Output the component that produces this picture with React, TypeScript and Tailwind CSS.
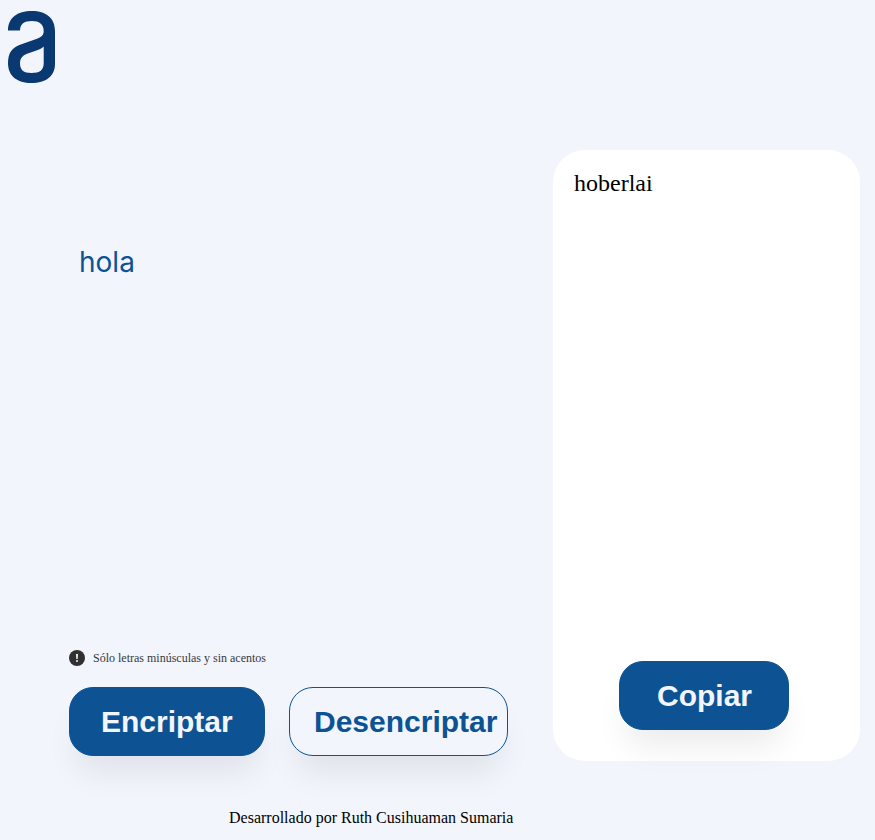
import { useState } from "react";

const buttonBase =
  "h-[69px] rounded-3xl border border-[#0d5394] text-left font-['Liberation_Sans',Arial,sans-serif] text-[30px] leading-9 font-bold shadow-[0_24px_32px_-8px_rgba(0,0,0,0.08)] cursor-pointer";

const pairs: [string, string][] = [
  ["e", "enter"],
  ["i", "imes"],
  ["a", "ai"],
  ["o", "ober"],
  ["u", "ufat"],
];

function encrypt(text: string) {
  return text.replace(/[eiaou]/g, (c) => pairs.find(([k]) => k === c)![1]);
}

function decrypt(text: string) {
  return pairs.reduce((t, [key, value]) => t.split(value).join(key), text);
}

function Logo() {
  return (
    <svg width="48" height="72" viewBox="0 0 48 72" fill="none" role="img" aria-label="Alura">
      <path
        d="M0 19.5C0 7 9 0 24 0C38 0 47 7 47 20V53C47 65 38 72 23.500 72C9 72 0 65 0 52C0 42 4 36.500 12 33.700L29 27.700C34 25.700 35.700 24 35.700 20C35.700 13 31 10 24 10C16 10 12 13 12 19.500ZM35.700 35.500C34 37.500 31 38.700 27 40L19 42.700C14.500 44.500 12 47.500 12 52C12 59 15.500 62 23.500 62C32 62 35.700 59 35.700 52Z"
        fill="#0a3871"
        fillRule="evenodd"
      />
    </svg>
  );
}

export default function App() {
  const [text, setText] = useState("hola");
  const [result, setResult] = useState("hoberlai");

  return (
    <div className="min-h-screen bg-[#f3f5fc] font-['Liberation_Serif','Times_New_Roman',serif] text-black">
      <header className="px-2 pt-[11px]">
        <Logo />
      </header>
      <main className="mt-[67px] flex items-stretch gap-11 pr-[15px] pl-[69px]">
        <section className="flex min-w-0 flex-1 flex-col pt-[83px] pb-[5px]">
          <textarea
            aria-label="Ingrese el texto aquí"
            value={text}
            onChange={(e) => setText(e.target.value)}
            className="w-full flex-1 resize-none bg-transparent px-[10px] py-3 font-['Inter',sans-serif] text-[28px] leading-[34px] font-normal text-[#0d5394] outline-none"
          />
          <p className="mt-4 flex items-center gap-2 text-xs text-[#343a40]">
            <svg width="16" height="16" viewBox="0 0 16 16" aria-hidden="true">
              <circle cx="8" cy="8" r="8" fill="#303030" />
              <path d="M7 4H9L8.700 9H7.300Z" fill="#f3f5fc" />
              <circle cx="8" cy="11" r="1" fill="#f3f5fc" />
            </svg>
            Sólo letras minúsculas y sin acentos
          </p>
          <div className="mt-[21px] flex gap-6">
            <button type="button" onClick={() => setResult(encrypt(text))} className={`${buttonBase} w-[196px] shrink-0 bg-[#0d5394] px-[31px] text-[#f3f5fc]`}>
              Encriptar
            </button>
            <button type="button" onClick={() => setResult(decrypt(text))} className={`${buttonBase} w-[219px] shrink-0 bg-[#f3f5fc] pl-6 text-[#0d5394]`}>
              Desencriptar
            </button>
          </div>
        </section>
        <section className="flex min-h-[611px] w-[307px] shrink-0 flex-col justify-between rounded-[32px] bg-white pt-[17px] pb-[31px]">
          <p className="px-[21px] text-2xl">{result}</p>
          <button
            type="button"
            onClick={() => navigator.clipboard?.writeText(result)}
            className={`${buttonBase} ml-[66px] w-[170px] bg-[#0d5394] pl-[37px] text-[#f3f5fc]`}
          >
            Copiar
          </button>
        </section>
      </main>
      <footer className="mt-[45px] pl-[229px] text-base">Desarrollado por Ruth Cusihuaman Sumaria</footer>
    </div>
  );
}
